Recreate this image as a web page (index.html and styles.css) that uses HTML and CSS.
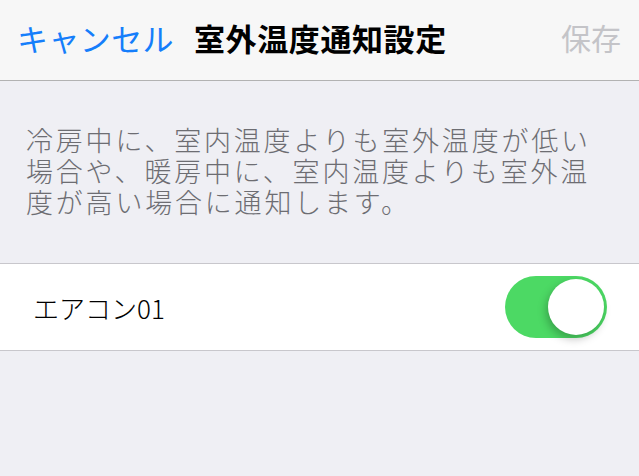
FILE: index.html
```html
<!DOCTYPE html>
<html lang="ja">
<head>
  <meta charset="UTF-8" />
  <meta name="viewport" content="width=device-width, initial-scale=1.0" />
  <title>室外温度通知設定</title>
  <link rel="stylesheet" href="styles.css">
</head>
<body>

<div class="navbar">
  <span class="nav-cancel">キャンセル</span>
  <span class="nav-title">室外温度通知設定</span>
  <span class="nav-save">保存</span>
</div>

<p class="description">冷房中に、室内温度よりも室外温度が低い<br>場合や、暖房中に、室内温度よりも室外温<br>度が高い場合に通知します。</p>

<div class="list">
  <div class="list-row">
    <span class="row-label">エアコン01</span>
    <div class="switch on">
      <div class="knob"></div>
    </div>
  </div>
</div>

</body>
</html>
```

FILE: styles.css
```css
* {
  box-sizing: border-box;
}

body {
  margin: 0;
  padding: 0;
  background: #efeff4;
  font-family: "Noto Sans CJK JP", "Noto Sans", sans-serif;
  color: #000;
  width: 639px;
  height: 476px;
  overflow: hidden;
}

.navbar {
  height: 81px;
  background: #f7f7f7;
  border-bottom: 1px solid #b2b2b2;
  display: flex;
  align-items: center;
  padding: 0 18px 6px 17px;
}

.nav-cancel {
  color: #157efb;
  font-size: 31px;
  letter-spacing: 0.4px;
}

.nav-title {
  margin-left: 20px;
  font-size: 31px;
  font-weight: 700;
  letter-spacing: 0.6px;
}

.nav-save {
  margin-left: auto;
  color: #c4c4c8;
  font-size: 30px;
}

.description {
  margin: 0;
  padding: 43px 10px 0 26px;
  height: 182px;
  font-size: 27px;
  font-weight: 300;
  letter-spacing: 2.8px;
  line-height: 31px;
  color: #6d6d72;
  white-space: nowrap;
}

.list {
  background: #fff;
  border-top: 1px solid #c8c7cc;
  border-bottom: 1px solid #c8c7cc;
}

.list-row {
  height: 86px;
  display: flex;
  align-items: center;
  padding: 0 32px 0 33px;
}

.row-label {
  font-size: 26px;
  font-weight: 300;
}

.switch {
  margin-left: auto;
  width: 102px;
  height: 62px;
  border-radius: 31px;
  background: #4cd964;
  position: relative;
}

.knob {
  position: absolute;
  top: 3px;
  right: 3px;
  width: 56px;
  height: 56px;
  border-radius: 50%;
  background: #fff;
  box-shadow: -2px 4px 8px rgba(0, 0, 0, 0.25);
}
```
